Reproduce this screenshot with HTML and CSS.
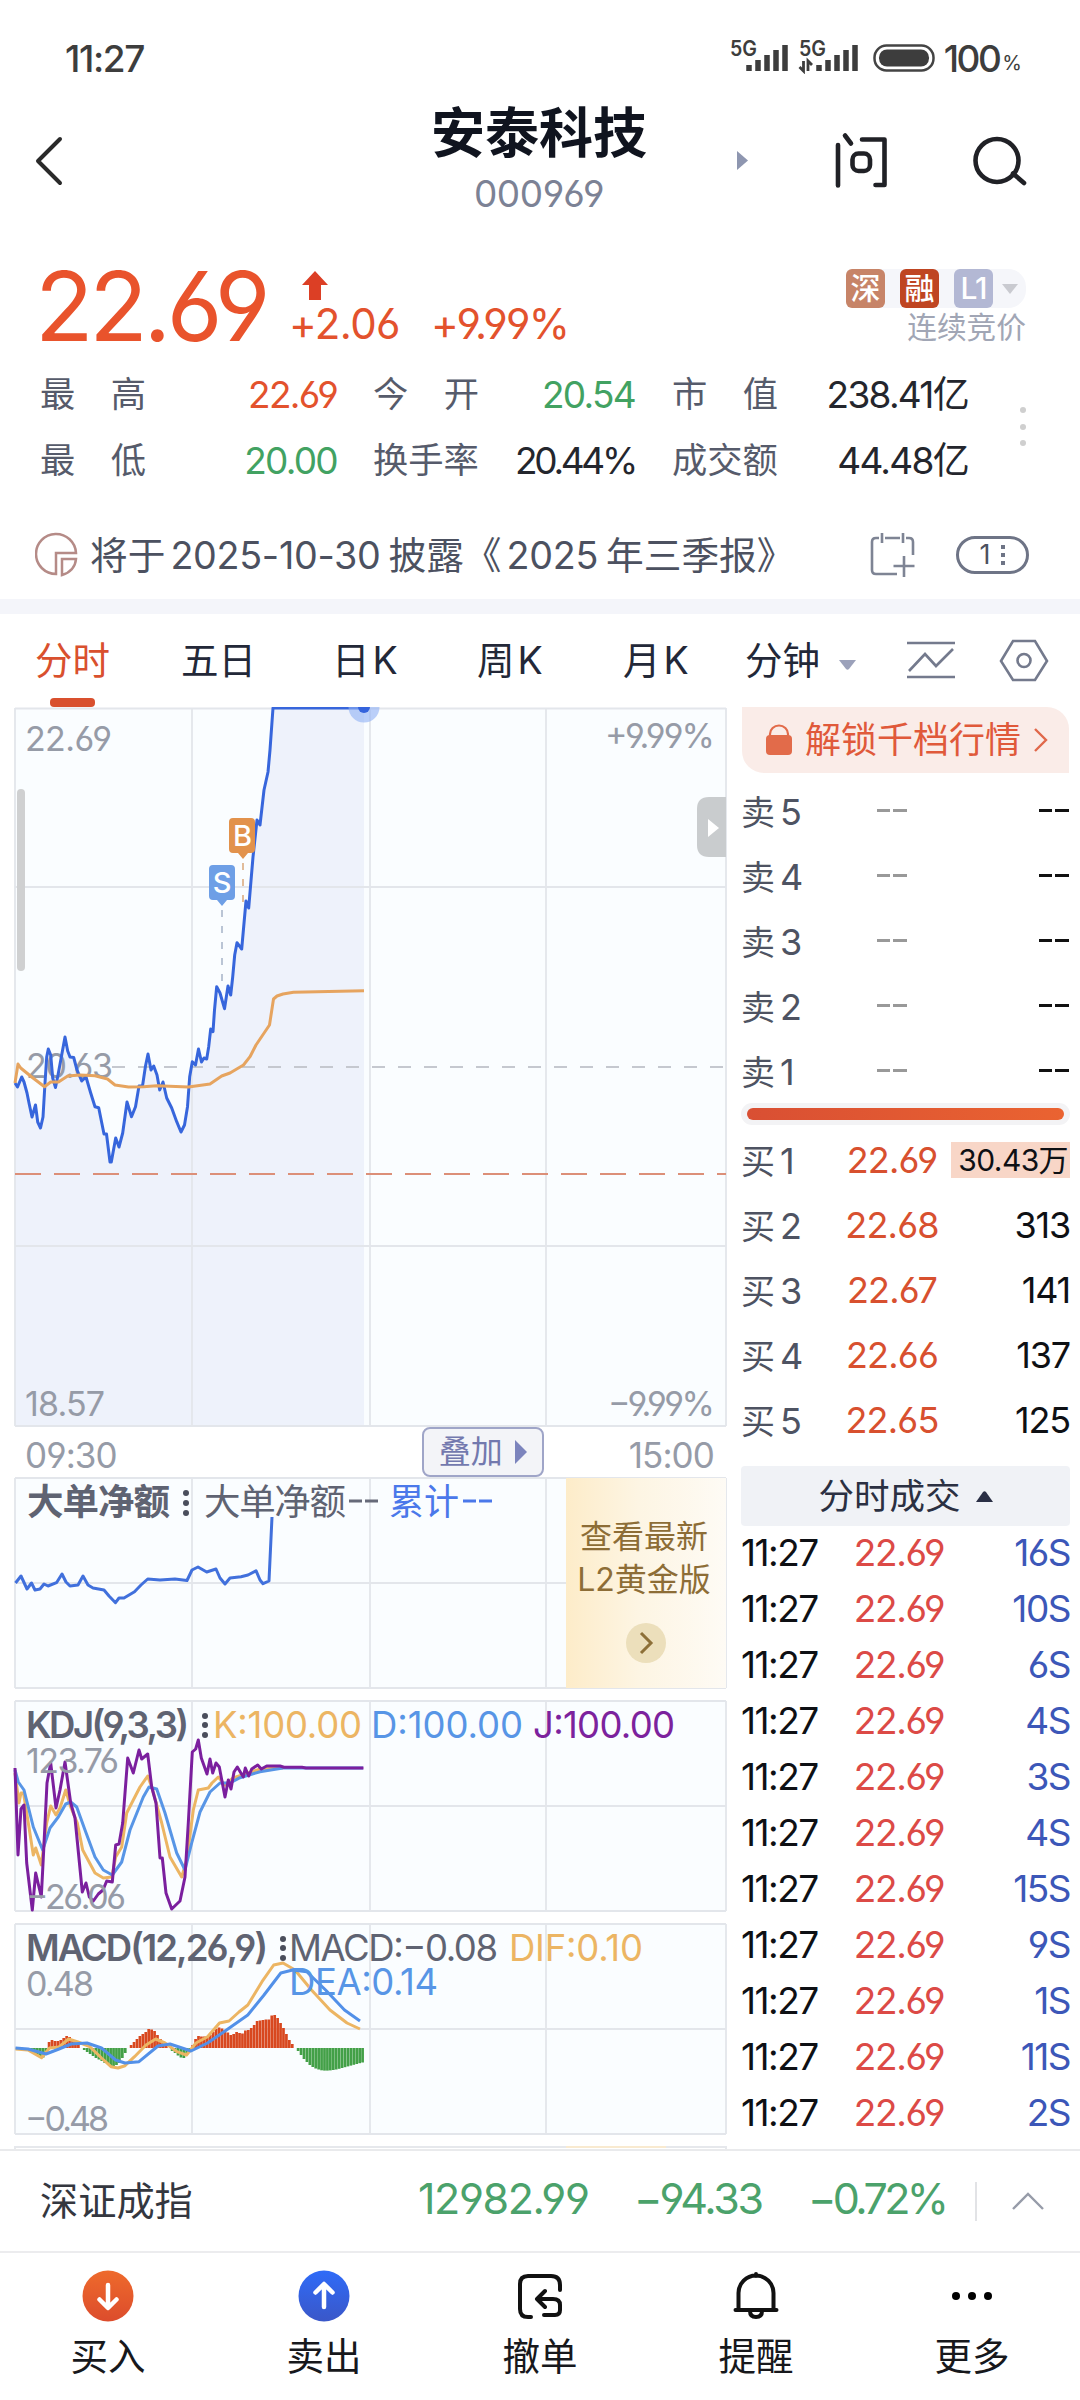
FILE: index.html
```html
<!DOCTYPE html>
<html lang="zh-CN">
<head>
<meta charset="utf-8">
<title>安泰科技 000969</title>
<link rel="stylesheet" href="styles.css">
</head>
<body>
<div class="status">
  <span class="clock">11:27</span>
  <svg class="signals" width="136" height="36" viewBox="728 38 136 36">
    <g class="st-text"><text x="731" y="56" textLength="27" lengthAdjust="spacingAndGlyphs">5G</text><text x="800" y="56" textLength="27" lengthAdjust="spacingAndGlyphs">5G</text></g>
    <g class="sig"><path d="M750 71v-6M759 71v-11M768 71v-16M777 71v-21M786 71v-26"/><path d="M820 71v-6M829 71v-11M838 71v-16M847 71v-21M856 71v-26"/></g>
    <path class="sig-thin" d="M804.500 61v10l-4-4M809 71v-10l4 4"/>
  </svg>
  <svg class="battery" width="62" height="28" viewBox="0 0 62 28"><rect x="1.500" y="1.500" width="59" height="25" rx="12" fill="none" stroke="#444" stroke-width="2.500"/><rect x="6" y="5.500" width="50" height="17" rx="8" fill="#3d3d3d"/></svg>
  <span class="charge">100</span><span class="pct">%</span>
</div>
<header class="top">
  <svg class="back" width="30" height="50" viewBox="0 0 30 50"><path d="M26 3 4 25l22 22"/></svg>
  <div class="title"><h1>安泰科技</h1><span>000969</span></div>
  <svg class="acts" width="300" height="60" viewBox="730 130 300 60">
    <path d="M737 151l11 9.500-11 9.500z" fill="#8e96b0"/>
    <g fill="none" stroke="#202126" stroke-width="4.600" stroke-linecap="round" stroke-linejoin="round"><path d="M838 145v40.500M845 135.500l6 8M862 139.500h22.500v45.500h-9"/><rect x="852.500" y="153.500" width="17.500" height="17.500" rx="6"/><circle cx="997" cy="160.500" r="21.500"/><path d="M1013 173.500l11 9.500"/></g>
  </svg>
</header>
<section class="quote">
  <div class="price-row">
    <span class="price">22.69</span>
    <div class="chg"><svg width="26" height="31" viewBox="0 0 26 31"><path d="M13 0 26 14h-7v15H7V14H0z" fill="#dc3f25"/></svg><div><span class="c1">+2.06</span><span class="c2">+9.99%</span></div></div>
    <div class="tags"><div class="tagline"><b class="t1">深</b><b class="t2">融</b><b class="t3">L1</b><i></i></div><p>连续竞价</p></div>
  </div>
  <div class="stats-wrap">
    <dl class="stats">
      <dt><span>最</span><span>高</span></dt><dd class="up">22.69</dd>
      <dt><span>今</span><span>开</span></dt><dd class="down">20.54</dd>
      <dt><span>市</span><span>值</span></dt><dd>238.41亿</dd>
      <dt><span>最</span><span>低</span></dt><dd class="down">20.00</dd>
      <dt>换手率</dt><dd class="tight">20.44%</dd>
      <dt>成交额</dt><dd>44.48亿</dd>
    </dl>
    <div class="more"><i></i><i></i><i></i></div>
  </div>
</section>
<section class="notice">
  <svg width="44" height="46" viewBox="35 532 44 46" fill="none" stroke="#b58b87" stroke-width="2.500"><path d="M56 574A20 20 0 1 1 76 553H56z"/><path d="M62 559h14q-1 12-14 16z"/></svg>
  <span class="notice-text">将于<em>2025-10-30</em>披露《<em>2025</em>年三季报》</span>
  <svg class="cal" width="46" height="46" viewBox="870 531 46 46" fill="none" stroke="#7e8494" stroke-width="2.600"><path d="M880 537h-3q-4 0-4 4v28q0 4 4 4h21M886 537h15M907 537h3q4 0 4 4v13M883 532v10M904 532v10M905 555v21M894.500 565h21"/></svg>
  <span class="pill">1<i></i></span>
</section>
<nav class="tabs">
  <a class="tab on">分时</a><a class="tab">五日</a><a class="tab">日<em>K</em></a><a class="tab">周<em>K</em></a><a class="tab">月<em>K</em></a>
  <a class="tab minute">分钟</a>
  <svg width="212" height="46" viewBox="837 638 212 46" fill="none" stroke="#747a8d" stroke-width="2.600"><path d="M839 660h17l-7 9q-1.500 1.500-3 0z" fill="#9ba1ba" stroke="none"/><path d="M907 643h48M907 677h48M909 671l16-17 11 12 17-17"/><path d="M1013 641h22l12 20-12 19h-22l-12-19z"/><circle cx="1024" cy="660.500" r="6.500"/></svg>
</nav>
<main class="board">
<div class="charts">
<svg width="740" height="720" viewBox="0 707 740 720">
  <rect x="15" y="708" width="711" height="718" fill="#fafdff"/>
  <path class="area" d="M15 1083 17.500 1087 21.700 1077 24 1082 27 1093 29 1103 32 1117 35.500 1105 37.700 1122 40.500 1128 43 1117 45 1083 46.700 1057 48.300 1049 50.700 1055 52.700 1078 55.500 1087.500 58 1075 61.700 1055 65 1037 67.700 1051 70 1057 73.700 1057.500 77 1070 81.700 1081 86 1077 90.700 1093 95 1106.700 98.700 1107.700 104 1134 106.500 1134 110 1162 111.300 1162 115.700 1138 119 1147 122.700 1133 127 1102 131.500 1116.700 135.500 1106.700 139 1086 142.500 1086 145.500 1066 148 1054 151 1070 153.700 1066 157 1075 159.700 1090 163 1082 166.700 1098 171.700 1108 176.700 1121.700 181 1132 184.500 1125 187.500 1106.700 189.700 1076.700 192.300 1061.700 195.500 1065 198.500 1049 201.500 1062 204 1058 206.700 1059 208.700 1046.700 210.700 1029 213 1031.700 214.500 1010 216.700 986.700 220 993 224.500 1008.700 228 986 230.700 995 232.700 977 234.700 955 237 942.700 241.700 949 246 901 248.700 908 253 857 257 820 260 825 264 790 268 772 270 750 273 708H364V1426H15z"/>
  <g class="grid"><path d="M15 708.500H726M15 1426H726M15 708V1426M726 708V1426M192 708V1426M370 708V1426M546 708V1426M15 887H726M15 1246H726"/></g>
  <path d="M112 1067H726" stroke="#c5c8cf" stroke-width="2" stroke-dasharray="13 13"/>
  <path d="M15 1174H726" stroke="#dc8f78" stroke-width="2" stroke-dasharray="26 13"/>
  <g class="axis"><text x="25" y="751" textLength="87">22.69</text><text x="605" y="748" textLength="110">+9.99%</text><text x="26" y="1078" textLength="87">20.63</text><text x="25" y="1416" textLength="80">18.57</text><text x="608" y="1416" textLength="107">−9.99%</text></g>
  <rect x="17" y="789" width="8" height="182" rx="4" fill="#cfd0d1"/>
  <path d="M726 797h-17q-12 0-12 12v36q0 12 12 12h17z" fill="#c9ccce"/><path d="M708 819l11 9-11 9z" fill="#fff"/>
  <path d="M222 910V986" stroke="#b3bfd1" stroke-width="1.800" stroke-dasharray="7 9"/>
  <path d="M243 863V903" stroke="#deb590" stroke-width="1.800" stroke-dasharray="7 9"/>
  <path class="line" stroke="#3766dc" d="M15 1083 17.500 1087 21.700 1077 24 1082 27 1093 29 1103 32 1117 35.500 1105 37.700 1122 40.500 1128 43 1117 45 1083 46.700 1057 48.300 1049 50.700 1055 52.700 1078 55.500 1087.500 58 1075 61.700 1055 65 1037 67.700 1051 70 1057 73.700 1057.500 77 1070 81.700 1081 86 1077 90.700 1093 95 1106.700 98.700 1107.700 104 1134 106.500 1134 110 1162 111.300 1162 115.700 1138 119 1147 122.700 1133 127 1102 131.500 1116.700 135.500 1106.700 139 1086 142.500 1086 145.500 1066 148 1054 151 1070 153.700 1066 157 1075 159.700 1090 163 1082 166.700 1098 171.700 1108 176.700 1121.700 181 1132 184.500 1125 187.500 1106.700 189.700 1076.700 192.300 1061.700 195.500 1065 198.500 1049 201.500 1062 204 1058 206.700 1059 208.700 1046.700 210.700 1029 213 1031.700 214.500 1010 216.700 986.700 220 993 224.500 1008.700 228 986 230.700 995 232.700 977 234.700 955 237 942.700 241.700 949 246 901 248.700 908 253 857 257 820 260 825 264 790 268 772 270 750 273 708H364"/>
  <path class="line" stroke="#e6a45f" d="M15 1083 18 1064 20.700 1068 31.700 1077 44.500 1086.700 50.700 1082 58.500 1082 67.700 1076 80 1075 95 1075.700 107.500 1079 115 1085 128.500 1087 143.500 1086.700 156.700 1085.700 188.500 1087 210 1084 221.700 1076 230 1073 243.500 1065 250 1056.700 256 1045 269.500 1025 273.500 999 277 996 283 994 293.500 992.300 364 990.700"/>
  <circle cx="364" cy="707" r="15.500" fill="#8fb0f5" opacity=".6"/><circle cx="364" cy="707" r="6" fill="#3463dc"/>
  <path d="M213 865h18q4 0 4 4v27q0 4-4 4h-4l-5 6-5-6h-4q-4 0-4-4v-27q0-4 4-4z" fill="#6e9fe6"/>
  <path d="M233 818h18q4 0 4 4v27q0 4-4 4h-3l-5 6-5-6h-5q-4 0-4-4v-27q0-4 4-4z" fill="#e2924c"/>
  <g class="mark"><text x="222" y="893">S</text><text x="242.500" y="846">B</text></g>
</svg>
<div class="time"><span>09:30</span><a>叠加<i></i></a><span>15:00</span></div>
<div class="net">
<svg width="740" height="212" viewBox="0 1477 740 212">
  <rect x="15" y="1478" width="711" height="210" fill="#fafdff"/>
  <g class="grid"><path d="M15 1478H726M15 1688H726M15 1478V1688M726 1478V1688M192 1478V1688M370 1478V1688M546 1478V1688M15 1583H566"/></g>
  <g class="ind"><text class="b" x="27" y="1515" textLength="143">大单净额</text><text x="204" y="1515" textLength="142">大单净额</text><text x="389" y="1515" textLength="70" lengthAdjust="spacingAndGlyphs" fill="#4a78ea">累计</text></g>
  <path d="M349 1501h13M365 1501h13" stroke="#666a79" stroke-width="3"/><path d="M463 1501h13M479 1501h13" stroke="#4a78ea" stroke-width="3"/>
  <g class="dots"><circle cx="186" cy="1493" r="3"/><circle cx="186" cy="1503" r="3"/><circle cx="186" cy="1513" r="3"/></g>
  <path class="line" stroke="#4170dc" d="M15.500 1583 21 1576 27 1589 31.500 1583 35 1590 40 1589 44 1584 48 1586 56.500 1582.700 62 1574 66 1582 70 1586 78 1585 83 1576 88 1585 93 1588 104 1590 109 1596 115.500 1602.700 119 1598 124 1598 134.500 1591.700 141 1585 147.700 1579 160 1580 175 1579 187 1580.500 192 1570 198 1567 206.700 1572 216 1569 220 1578 225 1584 230 1578 241 1576.700 248 1575 256 1570.700 260 1580 263 1583.700 269 1581 272 1517"/>
</svg>
<div class="gold"><p>查看最新<br>L2黄金版</p><svg width="40" height="40" viewBox="0 0 40 40"><circle cx="20" cy="20" r="20" fill="#ecdfbb"/><path d="M15 10 25 20 15 30" fill="none" stroke="#8d7038" stroke-width="3"/></svg></div>
</div>
<svg class="panel" width="740" height="212" viewBox="0 1700 740 212">
  <rect x="15" y="1701" width="711" height="210" fill="#fafdff"/>
  <g class="grid"><path d="M15 1701H726M15 1911H726M15 1701V1911M726 1701V1911M192 1701V1911M370 1701V1911M546 1701V1911M15 1806H726"/></g>
  <g class="ind"><text class="b" x="26" y="1738" textLength="163">KDJ(9,3,3)</text><text x="213" y="1738" textLength="149" fill="#ecb563">K:100.00</text><text x="371" y="1738" textLength="152" fill="#5795e6">D:100.00</text><text x="533" y="1738" textLength="142" fill="#7c229d">J:100.00</text></g>
  <g class="dots"><circle cx="205" cy="1716" r="3"/><circle cx="205" cy="1725" r="3"/><circle cx="205" cy="1735" r="3"/></g>
  <path class="line" stroke="#ecb563" d="M15 1773 19 1803 21 1793 23.500 1793 28.300 1823 33.300 1855 35.700 1848 41.300 1865 46.700 1823 50.700 1806 56 1815 60 1808 65.700 1790 70.700 1807 77.300 1823 82.700 1850 95 1873 103.300 1878 111.700 1877 115.700 1857 121.700 1847 126.700 1813 133.300 1800 140 1787 147.700 1776 151.700 1787 161.700 1823 170 1857 181.700 1877 186.700 1860 193.300 1810 198.300 1790 208.300 1788 212 1783 218.300 1777 225 1785 233 1778 260 1769 283 1768"/>
  <path class="line" stroke="#5795e6" d="M15 1770 18.300 1782 24 1790 28.300 1807 33.300 1827 42.700 1850 50 1828 58.300 1817 65.700 1804 70.700 1802 76.700 1807 85 1830 95 1857 103.300 1870 112.300 1875 121.700 1862 130 1830 143.300 1797 149 1787 156.700 1789 165 1813 176.700 1853 185 1870 191.700 1843 200 1812 210 1792 220 1783 230 1783 240 1777.700 260 1771.700 283 1768H363"/>
  <path class="line" stroke="#7b1f9e" d="M15 1768 18 1855 21 1809 24 1805 26.700 1863 32.300 1910 35.700 1873 41.300 1897 43.700 1850 47 1783 50.700 1763 56 1808 60 1790 65 1762 70.700 1803 75 1818 82.300 1892 86 1883 89.300 1897 93.300 1901 98.300 1894 103 1890 106.700 1881 112.300 1882 115.700 1845 119 1844 122.700 1823 127.700 1758 133.300 1773 139 1750 141.700 1759 147.700 1754 150 1773 151.700 1787 156 1803 160 1858 162.300 1858 166 1893 171.700 1909 180 1901 185 1877 188.300 1823 192.300 1752 195.700 1749 198.300 1740 201.300 1758 207 1774 210 1759 212.700 1773 216 1763 219.300 1767 225 1797 228.300 1780 231 1789 234 1772 237.300 1767 243.300 1777 245.300 1768 248.700 1776 251.700 1769 257.700 1765 261.300 1769 266.700 1766 280 1766 284 1767.300 302 1767.300 306 1768H363.500"/>
  <g class="axis"><text x="26" y="1773" textLength="93">123.76</text><text x="26" y="1909" textLength="100">−26.06</text></g>
</svg>
<svg class="panel" width="740" height="212" viewBox="0 1923 740 212">
  <rect x="15" y="1924" width="711" height="210" fill="#fafdff"/>
  <g class="grid"><path d="M15 1924H726M15 2134H726M15 1924V2134M726 1924V2134M192 1924V2134M370 1924V2134M546 1924V2134M15 2029H726"/></g>
  <g id="macd-bars"></g>
  <path class="line" stroke="#ecb563" d="M15.500 2049 28 2050 41.500 2057.700 49.500 2048 59 2047 68.500 2039 78 2042 89.700 2046.700 101.500 2058 111 2066.700 118 2068 125 2065.700 134.500 2056.700 146 2045 155.700 2039 165 2043 177 2051.700 186.500 2055 196 2043 207.600 2036.700 219.500 2023 229 2021 239 2012 247.800 2005 262 1981.700 273.700 1965 283 1963 295 1970 311.500 1990 330 2010 347 2023 360 2029"/>
  <path class="line" stroke="#5290e8" d="M15.500 2048 28 2049 46 2054 59 2049 71 2044 87 2043 101.500 2048 115.600 2060 125 2063 139 2061.700 158 2046 170 2044 191 2051 207.600 2043 226.500 2030 247.800 2015 264 1995 280.800 1973 292.600 1970 306.800 1971.700 325.600 1990 344.500 2010 360 2021"/>
  <g class="ind"><text class="b" x="26" y="1961" textLength="242">MACD(12,26,9)</text><text x="289" y="1961" textLength="209">MACD:−0.08</text><text x="509" y="1961" textLength="134" fill="#ecb563">DIF:0.10</text><text x="289" y="1995" textLength="149" fill="#5795e6">DEA:0.14</text></g>
  <g class="dots"><circle cx="283" cy="1939" r="3"/><circle cx="283" cy="1948" r="3"/><circle cx="283" cy="1958" r="3"/></g>
  <g class="axis"><text x="26" y="1996" textLength="68">0.48</text><text x="25" y="2131" textLength="84">−0.48</text></g>
</svg>
<svg class="panel" width="740" height="3" viewBox="0 0 740 3"><path d="M15 3V1H726V3" fill="none" stroke="#e6e8ec" stroke-width="2"/><path d="M566 1h100" stroke="#f9ead0" stroke-width="2"/></svg>
</div>
<aside class="book">
  <a class="unlock"><svg width="26" height="32" viewBox="0 0 26 32"><rect y="11" width="26" height="20" rx="4" fill="#e26b4a"/><path d="M4 12v-2a9 8.500 0 0 1 18 0v2" fill="none" stroke="#e26b4a" stroke-width="2.200"/></svg><span>解锁千档行情</span><svg width="14" height="24" viewBox="0 0 14 24"><path d="M1 1 12 12 1 23" fill="none" stroke="#e0684a" stroke-width="2.400"/></svg></a>
  <ul class="orders">
    <li><span>卖<em>5</em></span><i class="nil"></i><i class="nil dark"></i></li>
    <li><span>卖<em>4</em></span><i class="nil"></i><i class="nil dark"></i></li>
    <li><span>卖<em>3</em></span><i class="nil"></i><i class="nil dark"></i></li>
    <li><span>卖<em>2</em></span><i class="nil"></i><i class="nil dark"></i></li>
    <li><span>卖<em>1</em></span><i class="nil"></i><i class="nil dark"></i></li>
  </ul>
  <div class="ratio"><i></i></div>
  <ul class="orders buy">
    <li><span>买<em>1</em></span><b>22.69</b><u class="hot">30.43万</u></li>
    <li><span>买<em>2</em></span><b>22.68</b><u>313</u></li>
    <li><span>买<em>3</em></span><b>22.67</b><u>141</u></li>
    <li><span>买<em>4</em></span><b>22.66</b><u>137</u></li>
    <li><span>买<em>5</em></span><b>22.65</b><u>125</u></li>
  </ul>
  <div class="deal-head">分时成交<svg width="17" height="11" viewBox="0 0 17 11"><path d="M0 11 7 1q1.500-1.500 3 0l7 10z" fill="#2a2f45"/></svg></div>
  <ul class="deals">
    <li><span>11:27</span><b>22.69</b><u>16S</u></li>
    <li><span>11:27</span><b>22.69</b><u>10S</u></li>
    <li><span>11:27</span><b>22.69</b><u>6S</u></li>
    <li><span>11:27</span><b>22.69</b><u>4S</u></li>
    <li><span>11:27</span><b>22.69</b><u>3S</u></li>
    <li><span>11:27</span><b>22.69</b><u>4S</u></li>
    <li><span>11:27</span><b>22.69</b><u>15S</u></li>
    <li><span>11:27</span><b>22.69</b><u>9S</u></li>
    <li><span>11:27</span><b>22.69</b><u>1S</u></li>
    <li><span>11:27</span><b>22.69</b><u>11S</u></li>
    <li><span>11:27</span><b>22.69</b><u>2S</u></li>
  </ul>
</aside>
</main>
<section class="index">
  <span class="iname">深证成指</span><span class="i1">12982.99</span><span class="i2">−94.33</span><span class="i3">−0.72%</span><i class="bar"></i>
  <svg width="32" height="18" viewBox="0 0 32 18"><path d="M1 17 16 2l15 15" fill="none" stroke="#979ca9" stroke-width="2.400"/></svg>
</section>
<nav class="bottom">
  <a><svg width="52" height="52" viewBox="0 0 52 52"><defs><linearGradient id="go" x2="0" y2="1"><stop stop-color="#ee6a2c"/><stop offset="1" stop-color="#dc4c2c"/></linearGradient><linearGradient id="gb" x2="0" y2="1"><stop stop-color="#2f6bf8"/><stop offset="1" stop-color="#3a57c8"/></linearGradient></defs><circle cx="26" cy="26" r="25.500" fill="url(#go)"/><path d="M26 15v22M17.500 29.500 26 38l8.500-8.500" class="w"/></svg><span>买入</span></a>
  <a><svg width="52" height="52" viewBox="0 0 52 52"><circle cx="26" cy="26" r="25.500" fill="url(#gb)"/><path d="M26 37V15M17.500 22.500 26 14l8.500 8.500" class="w"/></svg><span>卖出</span></a>
  <a><svg width="52" height="52" viewBox="0 0 52 52"><path class="k" d="M17 47h-3q-8 0-8-8V14q0-8 8-8h23q9 0 9 9v5M31 21l-8 8 8 8M24 29h15q7 0 7 6v5q0 5-5 5H30"/></svg><span>撤单</span></a>
  <a><svg width="52" height="52" viewBox="0 0 52 52"><path class="k" d="M8.500 39V23a17.500 17.500 0 0 1 35 0v16M5.500 40h41M20 41q0 6 6 6t6-6M26 4v2"/></svg><span>提醒</span></a>
  <a><svg width="52" height="52" viewBox="0 0 52 52"><circle cx="10" cy="26" r="4"/><circle cx="26" cy="26" r="4"/><circle cx="42" cy="26" r="4"/></svg><span>更多</span></a>
</nav>
<script src="macd.js"></script>
</body>
</html>
```
FILE: macd.js
```js
// MACD histogram: one bar per sample, heights in pixels from the zero line
const bars = [0,0,-.5,-1,-2,-4,-6,-8,-9,-9.5,-6,6,8,7,7,8,10,12,11,8,7,4,0,-2,-4,-6,-8,-10,-11.5,-13,-15,-16,-18,-18.5,-17,-15,-10,-5,0,3,6,9,12,14,16,19,18.5,17,13,9,5.5,3,0,-3,-5,-7.5,-9.5,-10,-7,-3,3,9,12,11.5,11.5,12,13,16,19,20.5,19.5,18,15.5,13,14,16,15,14.5,17.5,18,20,23,27,27.5,28,28.5,28.5,32.5,33,30,25,20,14,8,4,0,-3,-7,-11,-14,-17,-19,-20.5,-21.5,-22.3,-22.6,-22.6,-22.4,-22,-21.5,-20.8,-20,-19.2,-18.4,-17.6,-16.8,-16,-15.2,-14.5];
const zero = 2048, step = 2.93;
document.getElementById('macd-bars').innerHTML = bars.map((v, i) =>
  `<rect x="${(15.5 + i * step).toFixed(2)}" y="${v > 0 ? zero - v : zero}" width="2.7" height="${Math.abs(v)}" fill="${v > 0 ? '#d8481f' : '#43a047'}"/>`).join('');
```
FILE: styles.css
```css
* { box-sizing: border-box; margin: 0; padding: 0; }
body { width: 1080px; height: 2400px; background: #fff; color: #222; font-family: Inter, "Noto Sans CJK SC", sans-serif; font-feature-settings: "cv03", "cv04"; overflow: hidden; display: flex; flex-direction: column; }
ul { list-style: none; }
em, i { font-style: normal; }
u { text-decoration: none; }
b { font-weight: 400; }
svg { display: block; flex: none; }

.status { height: 100px; padding: 16px 58px 0 65px; display: flex; align-items: center; color: #3d3d3d; }
.clock { font-size: 37px; letter-spacing: -1.400px; font-weight: 500; width: 664px; }
.signals { margin-top: -4px; }
.st-text { font-size: 21px; font-weight: 600; fill: #3d3d3d; }
.sig { stroke: #3d3d3d; stroke-width: 5.500; fill: none; }
.sig-thin { stroke: #3d3d3d; stroke-width: 2.800; fill: none; }
.battery { margin-left: 10px; }
.charge { font-size: 37px; letter-spacing: -2.500px; margin-left: 9px; font-weight: 500; }
.pct { font-size: 20px; margin: 9px 0 0 3px; }

.top { height: 140px; display: flex; padding: 0 54px 0 34px; align-items: flex-start; }
.back { margin-top: 36px; fill: none; stroke: #2a2a2a; stroke-width: 4; stroke-linecap: round; stroke-linejoin: round; }
.title { width: 440px; margin-left: 255px; text-align: center; flex: none; }
.title h1 { font-size: 54px; font-weight: 700; line-height: 60px; margin-top: 4px; color: #10141f; }
.title span { display: block; font-size: 37px; line-height: 44px; color: #7c8295; letter-spacing: -.4px; margin-top: 8px; }
.acts { margin: 30px -4px 0 -29px; }

.quote { height: 260px; }
.price-row { height: 110px; display: flex; padding: 0 54px 0 35px; }
.price { font-size: 96px; color: #e9532c; letter-spacing: -4.300px; line-height: 132px; width: 254px; white-space: nowrap; }
.chg { color: #e3522d; font-size: 42px; letter-spacing: -1.700px; width: 400px; padding-top: 31px; }
.chg svg { margin-left: 13px; }
.chg div { line-height: 50px; margin-top: -3px; display: flex; }
.c1 { width: 142px; letter-spacing: -.6px; }
.tags { margin-left: auto; text-align: right; padding-top: 29px; width: 180px; }
.tagline { display: flex; gap: 15px; background: #f5f6fa; border-radius: 8px 18px 18px 8px; height: 39px; align-items: center; }
.tagline b { width: 39px; height: 39px; border-radius: 6px; color: #fff; font-size: 30px; line-height: 39px; text-align: center; font-weight: 500; }
.t1 { background: #c78468; }
.t2 { background: #bf4522; }
.t3 { background: #b3b8d4; letter-spacing: -1px; }
.tagline i { border: 8px solid transparent; border-top: 10px solid #c9cad0; border-bottom: 0; margin-left: -6px; }
.tags p { font-size: 29.700px; color: #a1a6b5; line-height: 36px; margin-top: 1px; }

.stats-wrap { display: flex; justify-content: space-between; padding: 12px 54px 0 40px; }
.stats { display: grid; grid-template-columns: 106px 191px 106px 156px 106px 190px; line-height: 66px; width: 928px; justify-content: start; }
.stats dt { font-size: 35.300px; color: #565b6b; display: flex; justify-content: space-between; }
.stats dt:nth-of-type(3n+2) { margin-left: 36px; margin-right: -36px; }
.stats dt:nth-of-type(3n) { margin-left: 73px; margin-right: -73px; }
.stats dd { text-align: right; font-size: 37px; letter-spacing: -1.700px; color: #24262d; white-space: nowrap; }
.stats dd:nth-of-type(3n+2) { margin-right: -36px; }
.stats dd:nth-of-type(3n) { margin-right: -73px; }
.stats .up { color: #e3522d; }
.stats .down { color: #42a262; }
.stats .tight { letter-spacing: -3.300px; }
.more { display: flex; flex-direction: column; gap: 10.500px; padding-top: 45px; }
.more i { width: 6px; height: 6px; border-radius: 3px; background: #cfcfcf; }

.notice { height: 114px; border-bottom: 15px solid #f4f5fa; display: flex; align-items: center; padding: 10px 51px 0 35px; color: #4c5160; }
.notice-text { font-size: 37.700px; margin: -4px 0 0 11px; white-space: nowrap; }
.notice-text em { letter-spacing: -.300px; margin: 0 8px 0 5px; }
.cal { margin-left: auto; }
.pill { width: 73px; height: 38px; border: 3px solid #6e7486; border-radius: 19px; margin-left: 41px; font-size: 27px; display: flex; align-items: center; justify-content: center; gap: 11px; }
.pill i { width: 4px; height: 4px; background: #6e7486; box-shadow: 0 -8px #6e7486, 0 8px #6e7486; }

.tabs { height: 93px; display: flex; align-items: flex-start; font-size: 37.500px; line-height: 54px; color: #232838; padding-top: 20px; padding-left: 35px; }
.tab { width: 146px; height: 73px; white-space: nowrap; }
.tab em { margin-left: 3px; }
.tab.on { color: #d9502e; }
.tab.on::after { content: ""; display: block; width: 45px; height: 9px; border-radius: 4px; background: #d9502e; margin: 10px 0 0 15px; }
.tab:nth-child(3) { padding-left: 5px; }
.tab:nth-child(4) { padding-left: 4px; }
.tab:nth-child(5) { padding-left: 4px; width: 126px; }
.tab.minute { width: 92px; }
.tabs svg { margin-top: 4px; }

.board { height: 1442px; display: flex; overflow: hidden; }
.charts { width: 740px; flex: none; }
.area { fill: #eef2fb; }
.grid { stroke: #e3e6eb; stroke-width: 1.800; fill: none; }
.line { fill: none; stroke-width: 3; stroke-linejoin: round; }
.axis { fill: #969ba7; font-size: 34px; }
.mark { fill: #fff; font-size: 29px; font-weight: 500; text-anchor: middle; }
.ind { font-size: 36.500px; fill: #5f6372; }
.ind .b { font-weight: 600; }
.dots { fill: #4a4e5c; }
.time { height: 50px; display: flex; align-items: center; justify-content: space-between; padding: 0 26px 0 25px; font-size: 35px; letter-spacing: -.9px; color: #969ba7; }
.time span { line-height: 50px; padding-top: 5px; }
.time a { width: 122px; height: 50px; border: 2.500px solid #9fa5c8; border-radius: 8px; background: #f3f4f8; color: #7379ae; font-size: 32px; line-height: 44px; letter-spacing: 0; display: flex; align-items: center; justify-content: center; gap: 12px; margin-left: 220px; }
.time a i { border: 12px solid transparent; border-left: 12px solid #7c84bd; border-right: 0; }
.net { display: grid; grid-template-columns: 566px 160px 14px; height: 212px; }
.net > svg { grid-area: 1 / 1 / 2 / 4; }
.gold { grid-area: 1 / 2; height: 210px; margin-top: 1px; background: linear-gradient(90deg, #fdecc9, #fdf5e3 45%, #fefbf5); color: #8d6d36; text-align: center; z-index: 1; display: flex; flex-direction: column; align-items: center; font-size: 32px; line-height: 43px; padding-top: 37px; gap: 22px; white-space: nowrap; }
.gold p { padding-right: 4px; }
.panel { margin-top: 11px; }

.book { width: 329px; margin-left: 1px; color: #0e1014; }
.unlock { display: flex; align-items: center; height: 66px; width: 327px; border-radius: 0 22px 0 22px; background: #faece8; color: #e0593a; font-size: 36px; margin-left: 1px; padding-left: 24px; white-space: nowrap; }
.unlock span { margin: 0 13px; line-height: 60px; }
.orders { padding-top: 5px; font-size: 36px; }
.orders li { height: 65px; display: flex; align-items: center; }
.orders span { font-size: 34px; width: 99px; color: #4e5362; flex: none; }
.orders span em { font-size: 36px; margin-left: 5px; }
.nil { width: 30px; height: 3px; margin-left: 37px; background: linear-gradient(90deg, #999 13px, transparent 13px 16px, #999 16px); }
.nil.dark { margin-left: auto; margin-right: 1px; background: linear-gradient(90deg, #111 13px, transparent 13px 16px, #111 16px); }
.ratio { height: 22px; background: #f3f3f5; border-radius: 11px; padding: 5px 6px; }
.ratio i { display: block; height: 12px; border-radius: 6px; background: linear-gradient(90deg, #d94f33, #ea6331); }
.buy { padding-top: 2px; }
.buy b, .deals b { width: 110px; text-align: center; color: #d8502f; letter-spacing: -.8px; }
.buy b { margin-left: -3px; }
.orders u { margin-left: auto; letter-spacing: -1.200px; }
.orders .hot { background: #f8d6c7; width: 119px; height: 36px; font-size: 30px; line-height: 36px; text-align: right; padding-right: 2px; letter-spacing: -.6px; white-space: nowrap; flex: none; }
.deal-head { margin-top: 14px; height: 60px; border-radius: 4px; background: #f0f2f6; font-size: 35.500px; line-height: 57px; display: flex; align-items: center; justify-content: center; gap: 15px; color: #2b3042; }
.deals { font-size: 37px; margin-top: -2px; }
.deals li { height: 56px; display: flex; align-items: center; letter-spacing: -1.500px; }
.deals span { width: 103px; }
.deals b { color: #dc4a46; letter-spacing: -1.400px; }
.deals u { margin-left: auto; color: #3c57b8; }

.index { height: 104px; border-top: 2px solid #e9eaec; border-bottom: 2px solid #ececee; display: flex; align-items: center; padding-left: 40px; font-size: 43px; color: #4ba26b; white-space: nowrap; }
.index span { padding-bottom: 6px; }
.iname { font-size: 38.200px; color: #34373f; width: 378px; }
.i1 { width: 216px; letter-spacing: -1.400px; }
.i2 { width: 174px; letter-spacing: -2.300px; }
.i3 { width: 167px; letter-spacing: -3.600px; }
.bar { width: 2px; height: 39px; background: #e2e3e6; margin-right: 35px; }
.bottom { height: 147px; display: flex; padding-top: 17px; }
.bottom a { width: 216px; display: flex; flex-direction: column; align-items: center; font-size: 37.500px; line-height: 54px; gap: 8px; color: #17181c; }
.w { fill: none; stroke: #fff; stroke-width: 4.500; stroke-linecap: round; stroke-linejoin: round; }
.k { fill: none; stroke: #111; stroke-width: 4; stroke-linecap: round; stroke-linejoin: round; }
```
